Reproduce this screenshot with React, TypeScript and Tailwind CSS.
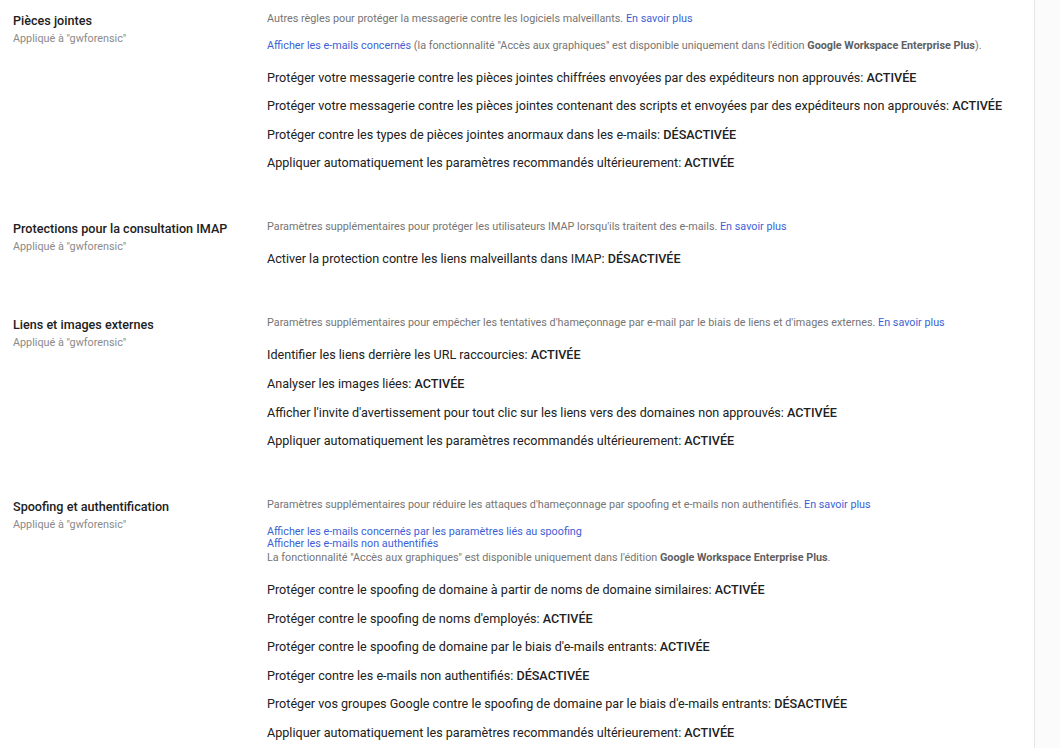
import React from 'react';

type Item = { label: string; value: string };

type Section = {
  title: string;
  desc: string;
  items: Item[];
  extra?: React.ReactNode;
  itemsMt: string;
  gap: string;
};

const LINK = 'text-[#3d5fd6]';

const sections: Section[] = [
  {
    title: 'Pièces jointes',
    desc: 'Autres règles pour protéger la messagerie contre les logiciels malveillants.',
    itemsMt: 'mt-[14px]',
    gap: 'gap-[8.4px]',
    extra: (
      <div className="mt-[11px] text-[10.8px] leading-[16px] text-[#757575]">
        <span className={LINK}>Afficher les e-mails concernés</span> (la fonctionnalité "Accès aux graphiques" est
        disponible uniquement dans l'édition <span className="font-bold text-[#5f5f5f]">Google Workspace Enterprise Plus</span>).
      </div>
    ),
    items: [
      { label: 'Protéger votre messagerie contre les pièces jointes chiffrées envoyées par des expéditeurs non approuvés:', value: 'ACTIVÉE' },
      { label: 'Protéger votre messagerie contre les pièces jointes contenant des scripts et envoyées par des expéditeurs non approuvés:', value: 'ACTIVÉE' },
      { label: 'Protéger contre les types de pièces jointes anormaux dans les e-mails:', value: 'DÉSACTIVÉE' },
      { label: 'Appliquer automatiquement les paramètres recommandés ultérieurement:', value: 'ACTIVÉE' },
    ],
  },
  {
    title: 'Protections pour la consultation IMAP',
    desc: 'Paramètres supplémentaires pour protéger les utilisateurs IMAP lorsqu\'ils traitent des e-mails.',
    itemsMt: 'mt-[14px]',
    gap: 'gap-[8.4px]',
    items: [{ label: 'Activer la protection contre les liens malveillants dans IMAP:', value: 'DÉSACTIVÉE' }],
  },
  {
    title: 'Liens et images externes',
    desc: 'Paramètres supplémentaires pour empêcher les tentatives d\'hameçonnage par e-mail par le biais de liens et d\'images externes.',
    itemsMt: 'mt-[14px]',
    gap: 'gap-[8.7px]',
    items: [
      { label: 'Identifier les liens derrière les URL raccourcies:', value: 'ACTIVÉE' },
      { label: 'Analyser les images liées:', value: 'ACTIVÉE' },
      { label: 'Afficher l\'invite d\'avertissement pour tout clic sur les liens vers des domaines non approuvés:', value: 'ACTIVÉE' },
      { label: 'Appliquer automatiquement les paramètres recommandés ultérieurement:', value: 'ACTIVÉE' },
    ],
  },
  {
    title: 'Spoofing et authentification',
    desc: 'Paramètres supplémentaires pour réduire les attaques d\'hameçonnage par spoofing et e-mails non authentifiés.',
    itemsMt: 'mt-[16px]',
    gap: 'gap-[8.5px]',
    extra: (
      <div className="mt-[13px] text-[10.8px] leading-[12px]">
        <div className={LINK}>Afficher les e-mails concernés par les paramètres liés au spoofing</div>
        <div className={LINK}>Afficher les e-mails non authentifiés</div>
        <div className="mt-[1px] leading-[13px] text-[#757575]">
          La fonctionnalité "Accès aux graphiques" est disponible uniquement dans l'édition{' '}
          <span className="font-bold text-[#5f5f5f]">Google Workspace Enterprise Plus</span>.
        </div>
      </div>
    ),
    items: [
      { label: 'Protéger contre le spoofing de domaine à partir de noms de domaine similaires:', value: 'ACTIVÉE' },
      { label: 'Protéger contre le spoofing de noms d\'employés:', value: 'ACTIVÉE' },
      { label: 'Protéger contre le spoofing de domaine par le biais d\'e-mails entrants:', value: 'ACTIVÉE' },
      { label: 'Protéger contre les e-mails non authentifiés:', value: 'DÉSACTIVÉE' },
      { label: 'Protéger vos groupes Google contre le spoofing de domaine par le biais d\'e-mails entrants:', value: 'DÉSACTIVÉE' },
      { label: 'Appliquer automatiquement les paramètres recommandés ultérieurement:', value: 'ACTIVÉE' },
    ],
  },
];

function SettingSection({ s }: { s: Section }) {
  return (
    <div className="flex">
      <div className="w-[267px] shrink-0 pl-[13px] pt-[2px]">
        <div className="text-[12.6px] leading-[16px] font-medium text-[#212121]">{s.title}</div>
        <div className="mt-[3px] text-[10.8px] leading-[14px] text-[#8a8a8a]">Appliqué à "gwforensic"</div>
      </div>
      <div className="flex-1">
        <div className="text-[10.8px] leading-[16px] text-[#757575]">
          {s.desc} <span className={LINK}>En savoir plus</span>
        </div>
        {s.extra}
        <div className={`${s.itemsMt} flex flex-col ${s.gap}`}>
          {s.items.map((it, i) => (
            <div key={i} className="text-[12.6px] leading-[20px] text-[#212121]">
              {it.label} <span className="font-medium">{it.value}</span>
            </div>
          ))}
        </div>
      </div>
    </div>
  );
}

export default function App() {
  return (
    <div className="flex h-[748px] w-[1060px] overflow-hidden bg-white" style={{ fontFamily: 'Roboto, "Noto Sans", sans-serif' }}>
      <div className="flex w-[1035px] shrink-0 flex-col gap-[46px] border-r border-[#e6e6e6] pt-[11px]">
        {sections.map((s, i) => (
          <SettingSection key={i} s={s} />
        ))}
      </div>
      <div className="flex-1 bg-[#fbfbfb]" />
    </div>
  );
}
